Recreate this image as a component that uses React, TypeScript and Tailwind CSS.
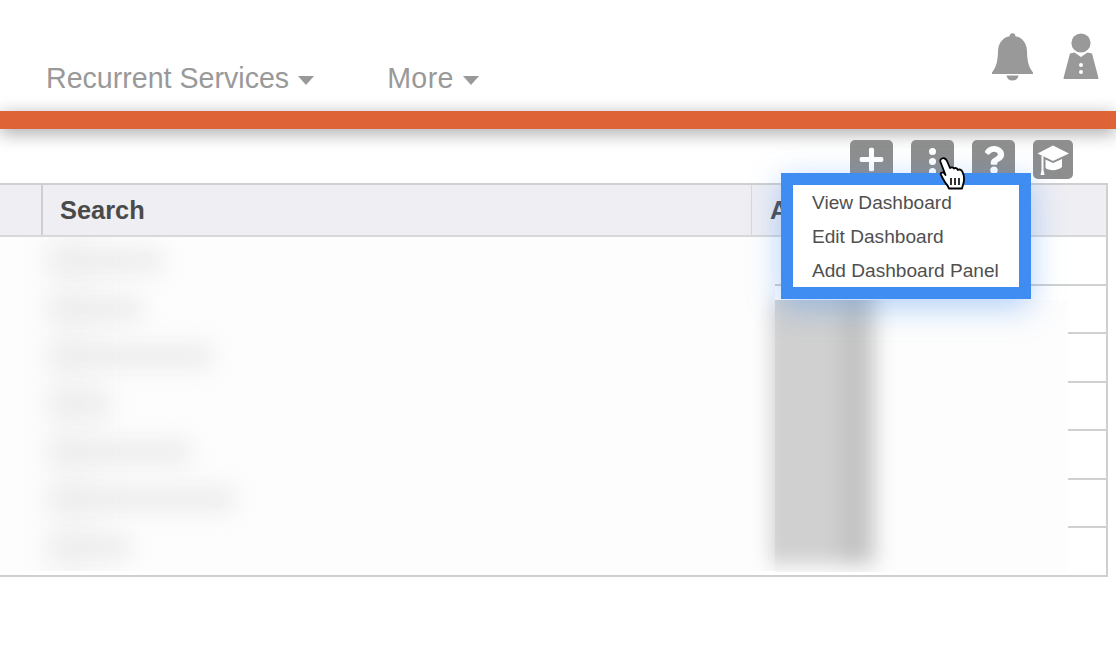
import { FaPlus, FaQuestion } from 'react-icons/fa'

const leftBlobs = [
  { pad: 50, width: 112 },
  { pad: 50, width: 92 },
  { pad: 50, width: 162 },
  { pad: 50, width: 60 },
  { pad: 50, width: 140 },
  { pad: 50, width: 184 },
  { pad: 50, width: 80 },
]

const rowLines = [0, 1, 2, 3, 4, 5, 6]
const menuItems = ['View Dashboard', 'Edit Dashboard', 'Add Dashboard Panel']

function Caret() {
  return <span className="ml-[9px] mt-[4px] h-0 w-0 border-x-[8.5px] border-t-[9px] border-x-transparent border-t-[#999]" />
}

function BellIcon() {
  return (
    <svg viewBox="0 0 41 48" className="h-[48px] w-[41px]" fill="#999">
      <circle cx="20.5" cy="3" r="2.8" />
      <path d="M20.5 3 C29 3 34.5 9 35 18 C35.3 27 36 33 41 39.5 L41 41 L0 41 L0 39.5 C5 33 5.7 27 6 18 C6.5 9 12 3 20.5 3 Z" />
      <path d="M14.5 42.5 H26.5 C26 45.5 24 47.5 20.5 47.5 C17 47.5 15 45.5 14.5 42.5 Z" />
    </svg>
  )
}

function PersonIcon() {
  return (
    <svg viewBox="0 0 36 46" className="h-[46px] w-[36px]" fill="#999">
      <circle cx="18" cy="10" r="9.6" />
      <path d="M7 20.5 L11.5 19.5 L18 24 L24.5 19.5 L29 20.5 L35.5 45 Q35.5 46 34.5 46 L1.5 46 Q0.5 46 0.5 45 Z" />
      <circle cx="18" cy="32" r="2" fill="#fff" />
      <circle cx="18" cy="39" r="2" fill="#fff" />
    </svg>
  )
}

function CapIcon() {
  return (
    <svg viewBox="0 0 40 39" className="h-[39px] w-[40px]" fill="#fff">
      <path d="M20 5.5 L36 13.5 L20 21 L4.5 13.5 Z" />
      <path d="M12.5 19.5 L20 23 L29 19 L29 27 C25 31 16 31 12.5 28 Z" />
      <path d="M8.5 15.5 L10.5 16.5 L10.5 30 L11.5 35 L7.5 35 L8.5 30 Z" />
    </svg>
  )
}

function HandCursor() {
  return (
    <svg viewBox="0 0 28 33" className="absolute left-[938px] top-[157px] h-[33px] w-[28px]">
      <path
        d="M4 1.5 C6 0.5 8 2 9 4 L12 11 C13 10 15 10 16 11.5 C17 10.5 19 11 20 13 C21 12 23.5 12.5 24.5 15 C26 18 26.5 22 25.5 26 L24 31.5 L11 31.5 L9.5 28.5 C7 26 4.5 21 3 18 C2 16 4 14.5 6 16 L7.5 18 L2.5 5 C2 3.5 2.8 2 4 1.5 Z"
        fill="#fff"
        stroke="#000"
        strokeWidth="1.8"
        strokeLinejoin="round"
      />
      <path d="M13 21 V28 M17 21 V28 M21 21 V28" stroke="#000" strokeWidth="1.6" />
    </svg>
  )
}

export default function App() {
  return (
    <div className="relative h-[660px] w-[1116px] overflow-hidden bg-white font-['Liberation_Sans',Arial,sans-serif]">
      {/* Top nav */}
      <header className="flex h-[111px] items-start justify-between pl-[46px] pr-[17px]">
        <nav className="mt-[61px] flex items-center text-[28.6px] leading-[34px] text-[#999]">
          <span className="flex items-center">Recurrent Services<Caret /></span>
          <span className="ml-[73px] flex items-center tracking-[0.4px]">More<Caret /></span>
        </nav>
        <div className="mt-[33px] flex items-start gap-[30px]">
          <BellIcon />
          <PersonIcon />
        </div>
      </header>

      <div className="h-[18px] bg-[#de6437] shadow-[0_4px_18px_rgba(0,0,0,0.36)]" />

      {/* Toolbar */}
      <div className="mt-[11px] flex justify-end gap-[18px] pr-[43px]">
        <div className="flex h-[39px] w-[43px] items-center justify-center rounded-[5px] bg-[#8e8e8e] text-white"><FaPlus className="h-[27px] w-[27px]" /></div>
        <div className="flex h-[39px] w-[43px] flex-col items-center gap-[3px] rounded-[5px] bg-[#8e8e8e] pt-[8px]">
          <span className="h-[7px] w-[7px] shrink-0 rounded-full bg-white" />
          <span className="h-[7px] w-[7px] shrink-0 rounded-full bg-white" />
          <span className="h-[7px] w-[7px] shrink-0 rounded-full bg-white" />
        </div>
        <div className="flex h-[39px] w-[43px] items-center justify-center rounded-[5px] bg-[#8e8e8e] text-white"><FaQuestion className="h-[28px] w-[28px]" /></div>
        <div className="h-[39px] w-[40px] rounded-[5px] bg-[#8e8e8e]"><CapIcon /></div>
      </div>

      {/* Table */}
      <div className="mt-[4px] h-[394px] w-[1108px] border-y-2 border-r-2 border-[#cfcfcf]">
        <div className="flex h-[52px] border-b-2 border-[#d8d8d8] bg-[#eeeef3] text-[25.4px] font-bold leading-[50px] text-[#4a4a4a]">
          <div className="w-[43px] border-r-2 border-[#cfcfcf]" />
          <div className="w-[709px] border-r border-[#d8d8d8] pl-[17px]">Search</div>
          <div className="pl-[18px]">A</div>
        </div>
        {rowLines.map((row) => (
          <div key={row} className="h-[48.5px] border-b-2 border-[#d0d0d0] last:border-b-0" />
        ))}
      </div>

      {/* Redacted cells */}
      <div className="absolute left-0 top-[237px] flex h-[334px] w-[775px] flex-col overflow-hidden bg-[#fdfdfd]">
        <div className="absolute left-[48px] top-[-20px] h-[380px] w-[50px] bg-[#f8f8f8] blur-[12px]" />
        <div className="absolute left-[772px] top-[66px] h-[262px] w-[40px] bg-[#cfcfcf] blur-[10px]" />
        {leftBlobs.map((blob, i) => (
          <div key={i} className="relative flex h-[48px] items-center" style={{ paddingLeft: blob.pad }}>
            <div className="h-[24px] bg-[#ececec] blur-[11px]" style={{ width: blob.width }} />
          </div>
        ))}
      </div>
      <div className="absolute left-[775px] top-[300px] h-[272px] w-[293px] overflow-hidden bg-[#fdfdfd]">
        <div className="-mt-[70px] ml-[-12px] flex h-[334px] w-fit blur-[10px]">
          <div className="h-full w-[78px] bg-[#d0d0d0]" />
          <div className="h-full w-[26px] bg-[#c2c2c2]" />
          <div className="h-full w-[10px] bg-[#d4d4d4]" />
        </div>
      </div>

      {/* Dropdown */}
      <div className="absolute left-[781px] top-[173px] h-[126px] w-[250px] border-[12px] border-[#3f8cf3] bg-white py-[1px] pl-[19px] text-[19.1px] leading-[34px] text-[#4f4f4f] shadow-[0_8px_30px_rgba(63,140,243,0.4)]">
        {menuItems.map((item) => (
          <div key={item} className="whitespace-nowrap">{item}</div>
        ))}
      </div>

      <HandCursor />
    </div>
  )
}
